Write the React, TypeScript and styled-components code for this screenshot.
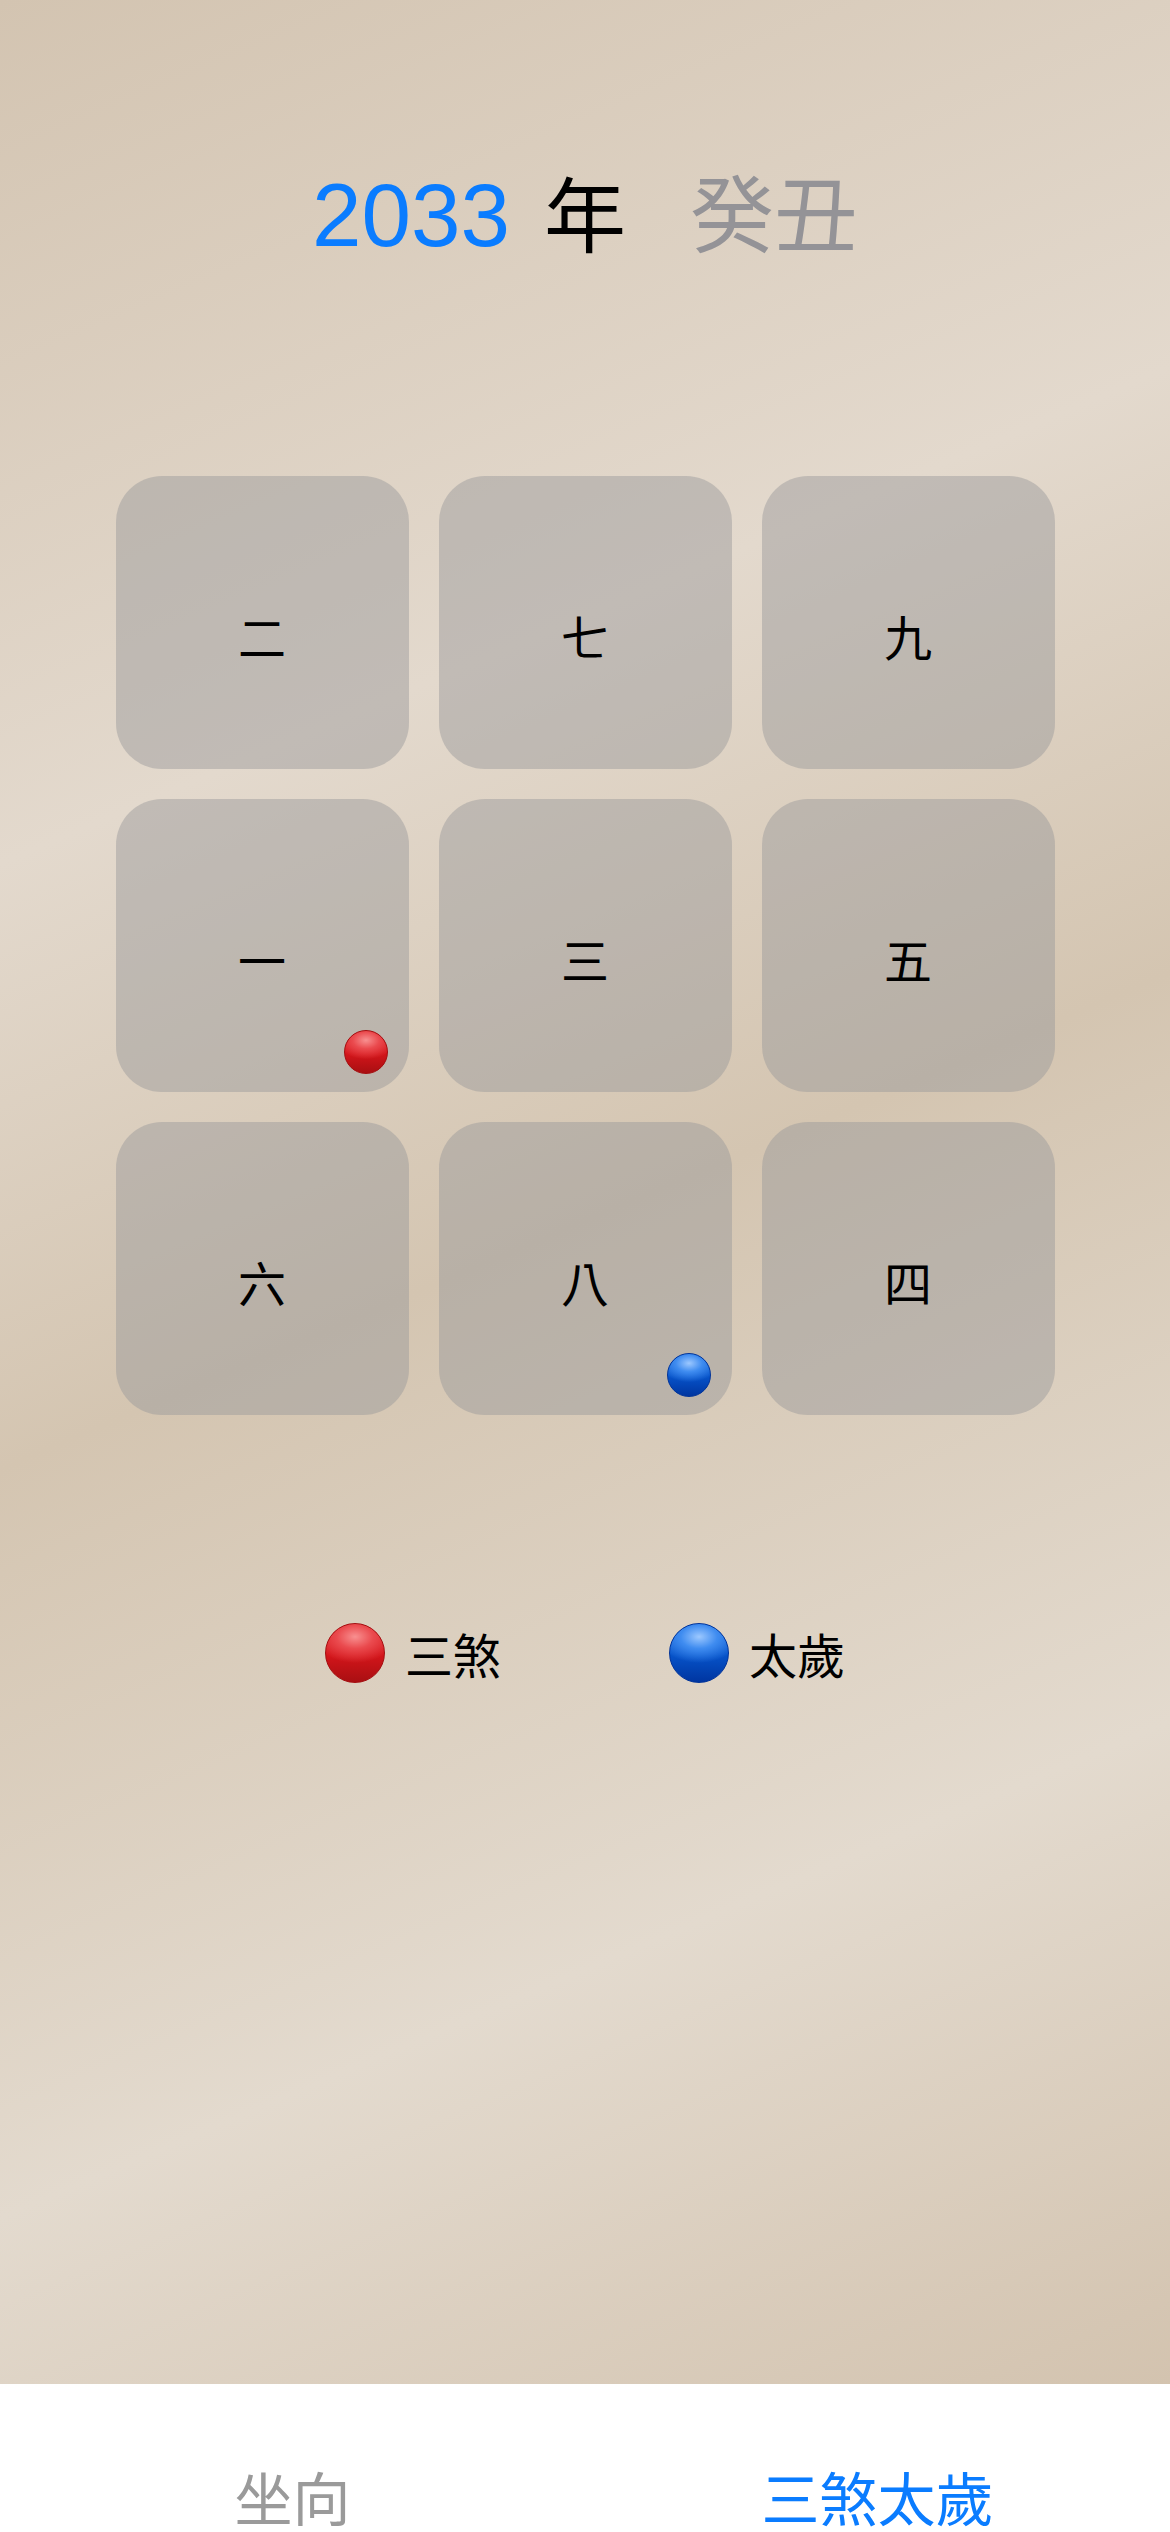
import React from "react";
import styled, { createGlobalStyle } from "styled-components";

const GlobalStyle = createGlobalStyle`
  html, body {
    margin: 0;
    padding: 0;
    background: #ffffff;
  }
  body {
    font-family: "Liberation Sans", "Noto Sans CJK TC", sans-serif;
  }
  * { box-sizing: border-box; }
`;

const Page = styled.div`
  width: 1170px;
  display: flex;
  flex-direction: column;
`;

const Main = styled.main`
  height: 2384px;
  flex: none;
  display: flex;
  flex-direction: column;
  align-items: center;
  padding-top: 162px;
  background: linear-gradient(
    157deg,
    #d3c4b1 0%,
    #e3d9cd 30%,
    #d4c5b1 51%,
    #e3dace 77%,
    #d3c3af 100%
  );
`;

const TitleRow = styled.h1`
  margin: 0;
  display: flex;
  align-items: baseline;
  justify-content: center;
  font-weight: 400;
  line-height: 96px;
  font-family: "Liberation Sans", "Noto Sans CJK TC", sans-serif;
`;

const Year = styled.span`
  font-size: 89px;
  color: #0a7cff;
`;

const YearUnit = styled.span`
  font-size: 82px;
  color: #000000;
  margin-left: 34px;
  font-family: "Noto Sans CJK TC", sans-serif;
`;

const Ganzhi = styled.span`
  font-size: 84px;
  color: #949397;
  margin-left: 64px;
  font-family: "Noto Sans CJK TC", sans-serif;
`;

const Grid = styled.div`
  margin-top: 213px;
  display: grid;
  grid-template-columns: repeat(3, 293px);
  grid-auto-rows: 293px;
  gap: 30px;
`;

const Cell = styled.div`
  position: relative;
  border-radius: 46px;
  background: rgba(150, 150, 152, 0.45);
  display: flex;
  align-items: center;
  justify-content: center;
  padding-top: 24px;
  font-family: "Noto Sans CJK TC", sans-serif;
  font-size: 48px;
  color: #000000;
`;

type Tone = "red" | "blue";

const ballBg: Record<Tone, string> = {
  red: `radial-gradient(ellipse 70% 45% at 50% 22%, #f89090 0%, #ea4a4e 45%, rgba(220,30,34,0) 100%),
        linear-gradient(180deg, #e2262b 0%, #d2151a 55%, #a90f12 100%)`,
  blue: `radial-gradient(ellipse 70% 45% at 50% 22%, #9cc8ff 0%, #3f8cf0 45%, rgba(20,100,220,0) 100%),
        linear-gradient(180deg, #1d6fe0 0%, #0652c8 55%, #0035a0 100%)`,
};

const ballBorder: Record<Tone, string> = {
  red: "#a40e10",
  blue: "#00339a",
};

const Ball = styled.span<{ $tone: Tone; $size: number }>`
  display: block;
  flex: none;
  width: ${(p) => p.$size}px;
  height: ${(p) => p.$size}px;
  border-radius: 50%;
  background: ${(p) => ballBg[p.$tone]};
  border: 1px solid ${(p) => ballBorder[p.$tone]};
`;

const CellBall = styled(Ball)`
  position: absolute;
  right: 21px;
  bottom: 18px;
`;

const Legend = styled.div`
  margin-top: 208px;
  display: flex;
  align-items: center;
  justify-content: center;
  gap: 168px;
`;

const LegendItem = styled.div`
  display: flex;
  align-items: center;
  gap: 20px;
  font-family: "Noto Sans CJK TC", sans-serif;
  font-size: 48px;
  line-height: 60px;
  color: #000000;
`;

const TabBar = styled.nav`
  height: 148px;
  flex: none;
  background: #ffffff;
  display: grid;
  grid-template-columns: 1fr 1fr;
  align-items: start;
  padding-top: 80px;
`;

const Tab = styled.div<{ $active?: boolean }>`
  text-align: center;
  font-family: "Noto Sans CJK TC", sans-serif;
  font-size: 58px;
  line-height: 64px;
  color: ${(p) => (p.$active ? "#0a7cff" : "#9a9a9a")};
`;

type CellData = { label: string; ball?: Tone };

const cells: CellData[] = [
  { label: "二" },
  { label: "七" },
  { label: "九" },
  { label: "一", ball: "red" },
  { label: "三" },
  { label: "五" },
  { label: "六" },
  { label: "八", ball: "blue" },
  { label: "四" },
];

export default function App() {
  return (
    <>
      <GlobalStyle />
      <Page>
        <Main>
          <TitleRow>
            <Year>2033</Year>
            <YearUnit>年</YearUnit>
            <Ganzhi>癸丑</Ganzhi>
          </TitleRow>
          <Grid>
            {cells.map((c) => (
              <Cell key={c.label}>
                {c.label}
                {c.ball && <CellBall $tone={c.ball} $size={44} />}
              </Cell>
            ))}
          </Grid>
          <Legend>
            <LegendItem>
              <Ball $tone="red" $size={60} />
              三煞
            </LegendItem>
            <LegendItem>
              <Ball $tone="blue" $size={60} />
              太歲
            </LegendItem>
          </Legend>
        </Main>
        <TabBar>
          <Tab>坐向</Tab>
          <Tab $active>三煞太歲</Tab>
        </TabBar>
      </Page>
    </>
  );
}
